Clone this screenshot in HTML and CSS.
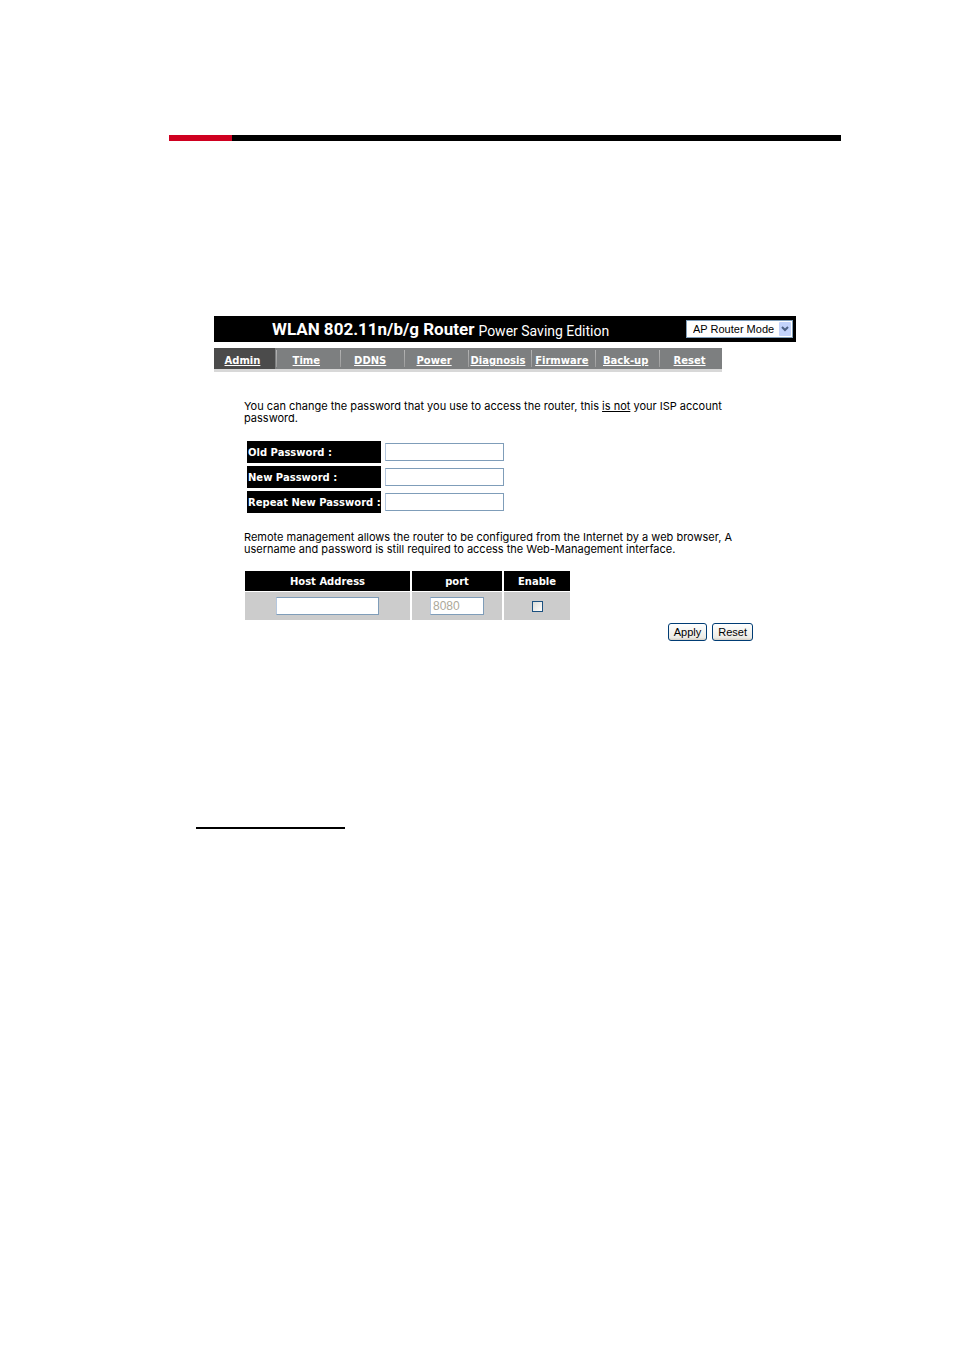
FILE: index.html
```html
<!DOCTYPE html>
<html lang="en">
<head>
<meta charset="utf-8">
<title>WLAN 802.11n/b/g Router</title>
<link rel="stylesheet" href="styles.css">
</head>
<body>
<div class="page">
  <div class="rule"></div>
  <main class="panel">
    <header class="banner">
      <h1 class="title">WLAN 802.11n/b/g Router</h1>
      <span class="edition">Power Saving Edition</span>
      <div class="mode">
        <select class="mode-select" aria-label="Mode"><option>AP Router Mode</option></select>
        <svg class="mode-arrow" viewBox="0 0 12 14" aria-hidden="true"><rect width="12" height="14" rx="1"/><path d="M3 5l3 3 3-3"/></svg>
      </div>
    </header>
    <nav class="tabs">
      <a class="tab active" href="#admin">Admin</a>
      <a class="tab" href="#time">Time</a>
      <a class="tab" href="#ddns">DDNS</a>
      <a class="tab" href="#power">Power</a>
      <a class="tab" href="#diagnosis">Diagnosis</a>
      <a class="tab" href="#firmware">Firmware</a>
      <a class="tab" href="#backup">Back-up</a>
      <a class="tab" href="#reset">Reset</a>
    </nav>
    <form class="content">
      <p class="note">You can change the password that you use to access the router, this <u>is not</u> your ISP account<br>password.</p>
      <div class="passwords">
        <label class="label" for="old">Old Password :</label><input class="field" id="old" type="password">
        <label class="label" for="new">New Password :</label><input class="field" id="new" type="password">
        <label class="label" for="repeat">Repeat New Password :</label><input class="field" id="repeat" type="password">
      </div>
      <p class="note">Remote management allows the router to be configured from the Internet by a web browser, A<br>username and password is still required to access the Web-Management interface.</p>
      <table class="remote">
        <thead>
          <tr><th class="col-host" id="h-host">Host Address</th><th class="col-port" id="h-port">port</th><th class="col-enable" id="h-enable">Enable</th></tr>
        </thead>
        <tbody>
          <tr>
            <td><input class="field host" type="text" aria-labelledby="h-host"></td>
            <td><input class="field port" type="text" value="8080" disabled aria-labelledby="h-port"></td>
            <td><input class="check" type="checkbox" aria-labelledby="h-enable"></td>
          </tr>
        </tbody>
      </table>
      <div class="actions">
        <button class="button" type="button">Apply</button>
        <button class="button" type="reset">Reset</button>
      </div>
    </form>
  </main>
  <hr class="underline">
</div>
</body>
</html>
```

FILE: styles.css
```css
* { box-sizing: border-box; }

body {
  margin: 0;
  background: #fff;
  color: #000;
  font: 10px/12px Verdana, "DejaVu Sans", sans-serif;
}

.page { padding: 135px 113px 0 169px; }

.rule {
  height: 6px;
  background: linear-gradient(to right, #cf0020 63px, #000 63px);
}

.panel { margin: 175px 45px 0; }

.banner {
  display: flex;
  align-items: center;
  height: 26px;
  padding: 0 3px 0 58px;
  background: #000;
  color: #fff;
  white-space: nowrap;
}

.title {
  margin: 0;
  font: bold 17px/24px Roboto, "Liberation Sans", sans-serif;
}

.edition { padding: 3px 0 0 4px; font: 14px/20px Roboto, "Liberation Sans", sans-serif; }

.mode { position: relative; margin-left: auto; }

.mode-select {
  display: block;
  width: 107px;
  height: 18px;
  padding: 0 6px;
  border: 1px solid #7f9db9;
  border-radius: 0;
  background: #fff;
  color: #000;
  font: 11px/16px "Liberation Sans", Arial, sans-serif;
  appearance: none;
}

.mode-arrow {
  position: absolute;
  top: 2px;
  right: 2px;
  width: 12px;
  height: 14px;
  pointer-events: none;
}
.mode-arrow rect { fill: #c3d3fb; }
.mode-arrow path { fill: none; stroke: #4d6185; stroke-width: 2; }

.tabs {
  display: grid;
  grid-template-columns: 61fr repeat(7, 64fr);
  margin: 6px 74px 0 0;
  border-bottom: 3px solid #d8d8d8;
}

.tab {
  height: 21px;
  padding-right: 1px;
  background: linear-gradient(to bottom, #b4b4b4, #9c9c9c) 1px 2px / 1px 17px no-repeat #7d7f80;
  color: #fff;
  font-weight: bold;
  line-height: 25px;
  text-align: center;
}
.tab.active { padding-right: 4px; background: #4b4b4b; }

.content { padding: 28px 43px 0 30px; }

.note { margin: 0; font: 11px/12px Inter, "DejaVu Sans", sans-serif; white-space: nowrap; }

.passwords {
  display: grid;
  grid-template-columns: 134px 119px;
  gap: 3px 4px;
  align-items: center;
  margin: 17px 3px 18px;
}

.label {
  height: 22px;
  padding-left: 1px;
  background: #000;
  color: #fff;
  font-weight: bold;
  line-height: 24px;
  white-space: nowrap;
}

.field {
  width: 100%;
  height: 18px;
  padding: 0 2px;
  border: 1px solid #7f9db9;
  border-left-color: #b5c7de;
  background: #fff;
  font: 12px/16px "Liberation Sans", Arial, sans-serif;
}
.host { width: 103px; }
.port { width: 54px; color: #aca899; }

.remote {
  width: 325px;
  margin: 16px 1px 0;
  border-collapse: separate;
  border-spacing: 0;
  table-layout: fixed;
}
.remote th {
  height: 21px;
  padding: 2px 0 0;
  border-bottom: 1px solid #fff;
  background: #000;
  color: #fff;
}
.remote td {
  height: 28px;
  padding: 0;
  background: #ccc;
  text-align: center;
}
.remote th + th, .remote td + td { border-left: 2px solid #fff; }
.remote .field { display: block; margin: 0 auto; }
.col-host { width: 165px; }
.col-port { width: 92px; }

.check {
  display: block;
  width: 11px;
  height: 11px;
  margin: 0 auto;
  border: 1px solid #1c5180;
  background: linear-gradient(135deg, #dcdcd7, #fff);
  appearance: none;
}

.actions { display: flex; justify-content: flex-end; gap: 5px; padding-top: 3px; }

.button {
  height: 18px;
  padding: 0 5px;
  border: 1px solid #003c74;
  border-radius: 3px;
  background: linear-gradient(to bottom, #fff, #ecebe5 85%, #d6d0c5);
  color: #000;
  font: 11px/16px "Liberation Sans", Arial, sans-serif;
}

.underline {
  width: 149px;
  height: 2px;
  margin: 186px 0 0 27px;
  border: 0;
  background: #000;
}
```
